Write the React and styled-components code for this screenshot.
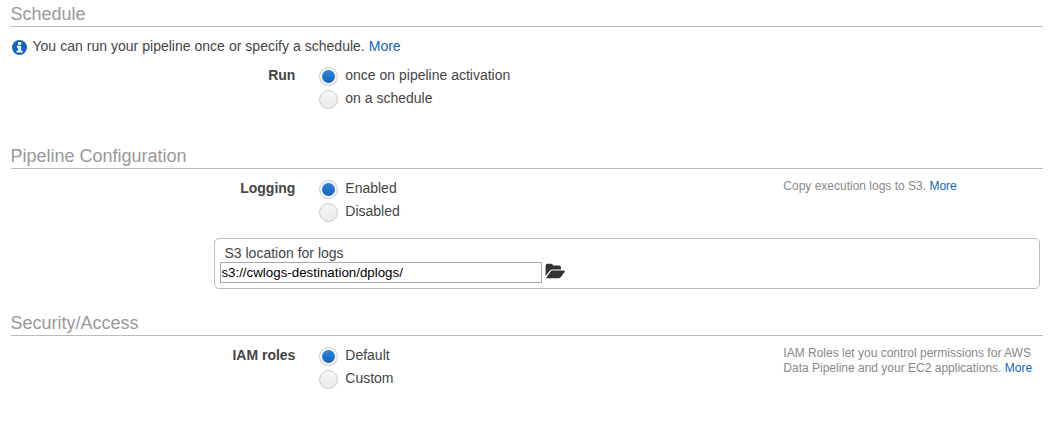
import React from "react";
import styled, { createGlobalStyle } from "styled-components";

const GlobalStyle = createGlobalStyle`
  * { box-sizing: border-box; }
  body {
    margin: 0;
    background: #fff;
    color: #444;
    font: 14px/16px "Liberation Sans", Arial, sans-serif;
  }
`;

const Page = styled.main`
  width: 1062px;
  padding: 0 19px 0 11px;
`;

const Section = styled.section`
  height: ${(p) => p.$height}px;
`;

const Heading = styled.h2`
  display: flex;
  align-items: flex-end;
  height: 27px;
  margin: 0;
  padding-bottom: 2px;
  border-bottom: 1px solid #bbb;
  color: #999;
  font-size: 18px;
  font-weight: 400;
  line-height: 20px;
  text-indent: -0.5px;
`;

const Notice = styled.p`
  display: flex;
  gap: 5.5px;
  height: 18px;
  margin: 11px 0 0;
`;

const NoticeText = styled.span`
  word-spacing: 0.13px;
`;

const InfoIcon = styled.svg`
  width: 15px;
  height: 15px;
  margin-top: 2px;
  margin-left: 1px;
`;

const Link = styled.a`
  color: #1166bb;
  text-decoration: none;
`;

const FormRow = styled.div`
  display: grid;
  grid-template-columns: 285px 441px 1fr;
  column-gap: 23px;
  margin-top: 11px;
`;

const FieldName = styled.div`
  padding-right: 0.6px;
  text-align: right;
  font-weight: 700;
`;

const Options = styled.div`
  display: flex;
  flex-direction: column;
  gap: 4px;
`;

const Option = styled.label`
  display: flex;
  gap: 7.3px;
  height: 19px;
`;

const Radio = styled.input`
  appearance: none;
  display: grid;
  place-items: center;
  flex: none;
  width: 19px;
  height: 19px;
  margin: 0;
  border: 1px solid #ccc;
  border-radius: 50%;
  background: linear-gradient(#f5f5f5, #ebebeb);
  &:checked {
    background: #f6f6f6;
  }
  &:checked::before {
    content: "";
    width: 13px;
    height: 13px;
    border-radius: 50%;
    background: linear-gradient(#2e83dc, #1464b8);
  }
`;

const Hint = styled.p`
  margin: -1px -8px 0 0;
  padding-left: 0.3px;
  color: #888;
  font-size: 12px;
  line-height: 15px;
`;

const LocationBox = styled.div`
  width: 826px;
  height: 51px;
  margin: 16px 0 0 203px;
  padding: 6px 5px 0;
  border: 1px solid #bbb;
  border-radius: 5px;
`;

const LocationLabel = styled.label`
  display: block;
  height: 17px;
  padding-left: 4.5px;
`;

const LocationField = styled.div`
  display: flex;
  gap: 3px;
`;

const LocationInput = styled.input`
  width: 322px;
  height: 21px;
  padding: 1px 1px 1px 0.4px;
  border: 1px solid #a9a9a9;
  border-radius: 0;
  background: #fff;
  color: #000;
  font: 13.333px "Liberation Sans", Arial, sans-serif;
`;

const FolderIcon = styled.svg`
  width: 20px;
  height: 16px;
  margin-top: 1px;
`;

function Choice({ name, options }) {
  return (
    <Options>
      {options.map((text, index) => (
        <Option key={text}>
          <Radio type="radio" name={name} defaultChecked={index === 0} />
          {text}
        </Option>
      ))}
    </Options>
  );
}

export default function App() {
  return (
    <>
      <GlobalStyle />
      <Page>
        <Section $height={142}>
          <Heading>Schedule</Heading>
          <Notice>
            <InfoIcon viewBox="0 0 15 15">
              <circle cx="7.5" cy="7.5" r="7.5" fill="#1166bb" />
              <path d="M6 2h3.2v2.8H6zM4.8 5.7h4.4v5h1.3v1.8H4.6v-1.8H6V7.5H4.8z" fill="#fff" />
            </InfoIcon>
            <NoticeText>
              You can run your pipeline once or specify a schedule. <Link>More</Link>
            </NoticeText>
          </Notice>
          <FormRow>
            <FieldName>Run</FieldName>
            <Choice name="run" options={["once on pipeline activation", "on a schedule"]} />
          </FormRow>
        </Section>

        <Section $height={167}>
          <Heading>Pipeline Configuration</Heading>
          <FormRow>
            <FieldName>Logging</FieldName>
            <Choice name="logging" options={["Enabled", "Disabled"]} />
            <Hint>
              Copy execution logs to S3. <Link>More</Link>
            </Hint>
          </FormRow>
          <LocationBox>
            <LocationLabel htmlFor="location">S3 location for logs</LocationLabel>
            <LocationField>
              <LocationInput id="location" defaultValue="s3://cwlogs-destination/dplogs/" />
              <FolderIcon viewBox="0 0 20 16" fill="#333">
                <path d="M.6 13V3Q.6.8 2.6.8H6q2 0 2 1.8h6.2q1.8 0 1.8 2v1.9H7.5q-1.6 0-2.5 1.1z" />
                <path d="M7.4 7.6H19q1.4 0 .6 1.2l-3.4 5q-1 1.4-2.4 1.4H2.2q-1.3 0-.5-1.1L5.5 8.7q.9-1.1 1.9-1.1z" />
              </FolderIcon>
            </LocationField>
          </LocationBox>
        </Section>

        <Section $height={118}>
          <Heading>Security/Access</Heading>
          <FormRow>
            <FieldName>IAM roles</FieldName>
            <Choice name="roles" options={["Default", "Custom"]} />
            <Hint>
              IAM Roles let you control permissions for AWS
              <br />
              Data Pipeline and your EC2 applications. <Link>More</Link>
            </Hint>
          </FormRow>
        </Section>
      </Page>
    </>
  );
}
